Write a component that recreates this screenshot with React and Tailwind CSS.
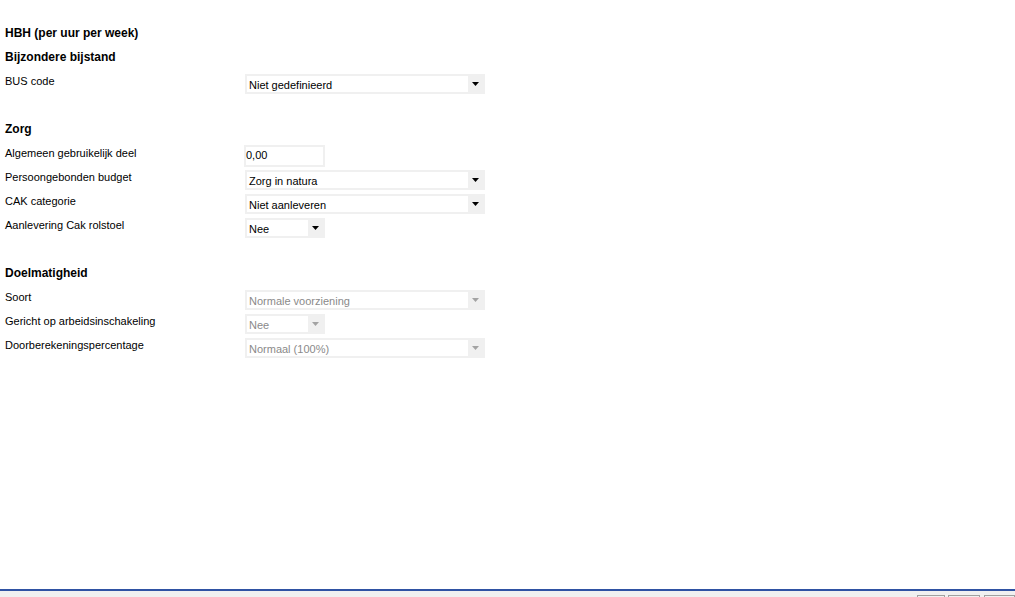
import React from "react";

const font = { fontFamily: '"Liberation Sans", Arial, sans-serif' };

function Arrow({ disabled }) {
  return (
    <div className="flex h-full w-[15px] shrink-0 items-center justify-center bg-[#f0f0f0]">
      <svg width="7" height="4" viewBox="0 0 7 4">
        <polygon points="0,0 7,0 3.5,4" fill={disabled ? "#a3a3a3" : "#000000"} />
      </svg>
    </div>
  );
}

function Select({ value, small, disabled }) {
  return (
    <div
      className={`mt-[5px] flex h-5 items-center border-2 border-[#f0f0f0] bg-white ${
        small ? "w-[80px]" : "w-[240px]"
      }`}
    >
      <span
        className={`flex-1 truncate pl-[2px] pt-[2px] text-[11px] leading-4 ${
          disabled ? "text-[#8a8a8a]" : "text-black"
        }`}
      >
        {value}
      </span>
      <Arrow disabled={disabled} />
    </div>
  );
}

function Row({ label, children }) {
  return (
    <div className="flex h-6 items-start">
      <div className="w-[240px] shrink-0 text-[11px] leading-6 text-black">{label}</div>
      {children}
    </div>
  );
}

function Heading({ children }) {
  return <div className="h-6 text-[12px] font-bold leading-6 text-black">{children}</div>;
}

function Spacer() {
  return <div className="h-6" />;
}

export default function App() {
  return (
    <div className="flex h-[597px] w-[1015px] flex-col overflow-hidden bg-white" style={font}>
      <div className="flex-1 px-[5px] pt-[21px]">
        <Heading>HBH (per uur per week)</Heading>
        <Heading>Bijzondere bijstand</Heading>
        <Row label="BUS code">
          <Select value="Niet gedefinieerd" />
        </Row>
        <Spacer />
        <Heading>Zorg</Heading>
        <Row label="Algemeen gebruikelijk deel">
          <div className="-ml-px mt-[4px] h-[22px] w-[81px] border-2 border-[#f0f0f0] bg-white pt-[1px] text-[11px] leading-[14px] text-black">
            0,00
          </div>
        </Row>
        <Row label="Persoongebonden budget">
          <Select value="Zorg in natura" />
        </Row>
        <Row label="CAK categorie">
          <Select value="Niet aanleveren" />
        </Row>
        <Row label="Aanlevering Cak rolstoel">
          <Select value="Nee" small />
        </Row>
        <Spacer />
        <Heading>Doelmatigheid</Heading>
        <Row label="Soort">
          <Select value="Normale voorziening" disabled />
        </Row>
        <Row label="Gericht op arbeidsinschakeling">
          <Select value="Nee" small disabled />
        </Row>
        <Row label="Doorberekeningspercentage">
          <Select value="Normaal (100%)" disabled />
        </Row>
      </div>
      <div className="h-[2px] bg-[#2f52a3]" />
      <div className="flex h-[6px] justify-end bg-[#f0f0f0] pt-[4px]">
        <div className="h-4 w-[28px] border border-[#a0a0a0] bg-[#f0f0f0]" />
        <div className="ml-[3px] h-4 w-[32px] border border-[#a0a0a0] bg-[#f0f0f0]" />
        <div className="ml-[4px] h-4 w-[31px] border border-[#a0a0a0] bg-[#f0f0f0]" />
      </div>
    </div>
  );
}
